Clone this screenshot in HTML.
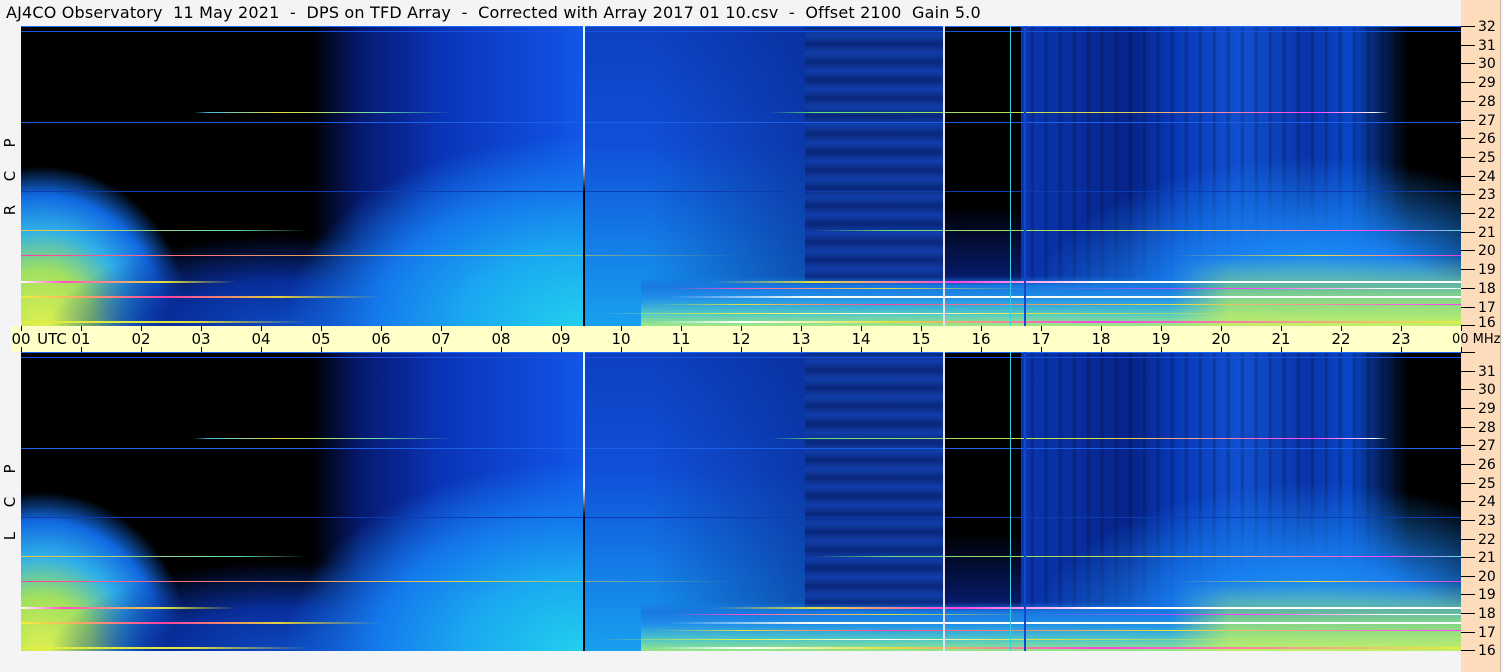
<!DOCTYPE html>
<html><head><meta charset="utf-8"><style>
*{margin:0;padding:0;box-sizing:border-box}
body{width:1503px;height:672px;background:#f4f4f6;position:relative;overflow:hidden;font-family:"DejaVu Sans","Liberation Sans",sans-serif;color:#000}
.title{position:absolute;left:6px;top:3px;font-size:16px;white-space:pre;letter-spacing:0.18px}
.peach{position:absolute;left:1461px;top:0;width:40px;height:672px;background:#fddcbc;border-right:1px solid #c8b8a8}
.panel{position:absolute;left:21px;width:1440px;height:300px;background:#000;overflow:hidden}
.panel div{position:absolute}
.l{left:0;width:1440px;height:1px}
.axis{position:absolute;left:12px;top:326px;width:1449px;height:26px;background:#ffffc8}
.tk{position:absolute;width:1px;height:5px;background:#000}
.lab{position:absolute;font-size:15px;top:330px;width:30px;text-align:center;margin-left:-15px;white-space:nowrap}
.rt{position:absolute;left:1461px;width:14px;height:1px;background:#000}
.rl{position:absolute;left:1478px;font-size:14px;line-height:14px}
.side{position:absolute;left:3px;font-size:15px;transform:rotate(-90deg);width:14px;text-align:center}
</style></head><body>
<div class="peach"></div>
<div class="title">AJ4CO Observatory  11 May 2021  -  DPS on TFD Array  -  Corrected with Array 2017 01 10.csv  -  Offset 2100  Gain 5.0</div>

<div class="side" style="top:134px">P</div>
<div class="side" style="top:167px">C</div>
<div class="side" style="top:201px">R</div>
<div class="side" style="top:460px">P</div>
<div class="side" style="top:493px">C</div>
<div class="side" style="top:527px">L</div>

<div class="panel" style="top:26px" id="p1">
 <div style="left:0;top:0;width:562px;height:300px;background:linear-gradient(90deg,#000 0,#000 290px,#061a70 340px,#0a34b8 420px,#1050e0 540px,#1258e8 562px)"></div>
 <div style="left:0;top:0;width:562px;height:300px;background:
  radial-gradient(ellipse 300px 190px at 562px 300px,#22d0ee 0,#1aa8f0 40%,#1478ec 70%,transparent 100%),
  radial-gradient(ellipse 230px 90px at 260px 300px,#0c48c0 0,#082c98 50%,transparent 100%),
  radial-gradient(ellipse 150px 160px at 20px 300px,#e0f050 0,#a0e060 35%,#30b0e8 60%,#1068e0 82%,transparent 100%)"></div>
 <div style="left:564px;top:0;width:220px;height:300px;background:linear-gradient(180deg,#0c40c0 0,#1050d8 40%,#1480e8 75%,#18a0ee 100%)"></div>
 <div style="left:564px;top:0;width:220px;height:300px;background:linear-gradient(90deg,transparent 30%,rgba(8,40,140,.6) 100%)"></div>
 <div style="left:784px;top:0;width:138px;height:300px;background:repeating-linear-gradient(180deg,#0a2e90 0,#1448c8 9px,#0a2e90 18px);opacity:.85"></div>
 <div style="left:924px;top:0;width:76px;height:300px;background:linear-gradient(180deg,#000 0,#000 60%,#061c70 85%,#0a40b0)"></div>
 <div style="left:1000px;top:0;width:440px;height:300px;background:linear-gradient(90deg,#0a36b0 0,#06248a 25%,#0838b8 35%,#1050d0 50%,#0a34a8 65%,#0846c8 75%,#000 88%)"></div>
 <div style="left:1000px;top:0;width:440px;height:300px;background:repeating-linear-gradient(90deg,transparent 0,transparent 9px,rgba(0,0,0,.25) 11px,transparent 14px)"></div>
 <div style="left:1000px;top:100px;width:440px;height:200px;background:radial-gradient(ellipse 290px 170px at 290px 200px,#30b0f0,#1880f0 50%,transparent 100%)"></div>
 <div style="left:620px;top:250px;width:820px;height:50px;background:linear-gradient(180deg,transparent,#1878e0 20%,#2090e8 45%,#50c8c8 75%,#a0e880)"></div>
 <div style="left:1150px;top:230px;width:290px;height:70px;background:linear-gradient(180deg,transparent,#a0e870 60%,#d0f060);opacity:.8;-webkit-mask-image:linear-gradient(90deg,transparent,#000 20%)"></div>
 <div class="l" style="top:0;background:#1a6cff"></div>
 <div class="l" style="top:5px;background:#1a50e0"></div>
 <div class="l" style="top:96px;background:#1a60e8"></div>
 <div class="l" style="top:165px;background:#0c3cb0"></div>
 <div class="l" style="top:86px;background:linear-gradient(90deg,transparent 12%,#40c0e0 13%,#e0e040 18%,#60e0b0 25%,transparent 30%,transparent 52%,#60e080 55%,#e0e040 75%,#ff40ff 90%,#fff 94%,transparent 95%)"></div>
 <div class="l" style="top:204px;background:linear-gradient(90deg,#f0c040,#60e0b0 15%,transparent 20%,transparent 55%,#60e080 60%,#e0e040 80%,#ff40ff 95%,#60e0e0)"></div>
 <div class="l" style="top:229px;background:linear-gradient(90deg,#ff40a0,#e0d040 30%,transparent 50%,transparent 80%,#f0e040 90%,#e040e0)"></div>
 <div class="l" style="top:255px;height:2px;background:linear-gradient(90deg,#fff 0,#ff50c0 3%,#e0e040 10%,transparent 15%,transparent 48%,#e0e040 55%,#ff40e0 65%,#fff 75%,#fff 100%)"></div>
 <div class="l" style="top:262px;background:linear-gradient(90deg,transparent 45%,#ff50c0 50%,#e0e040 60%,transparent 70%,#ff40ff 85%,#fff 95%)"></div>
 <div class="l" style="top:270px;height:2px;background:linear-gradient(90deg,#f0f040 0,#ff40a0 10%,#e0d040 18%,transparent 25%,transparent 45%,#ffffff 55%,#fff 100%)"></div>
 <div class="l" style="top:278px;background:linear-gradient(90deg,transparent 44%,#e0e040 50%,#ff40a0 60%,#e0e040 80%,#ff40ff 100%)"></div>
 <div class="l" style="top:287px;background:linear-gradient(90deg,transparent 40%,#e0f040 50%,#fff 60%,#e0e040 70%,transparent 90%)"></div>
 <div class="l" style="top:295px;height:2px;background:linear-gradient(90deg,#e0f040,#e0e040 12%,transparent 20%,transparent 44%,#fff 50%,#e0e040 60%,#ff40e0 75%,#e0f040)"></div>
 <div style="left:562px;top:0;width:2px;height:300px;background:linear-gradient(180deg,#e0f8ff,#fff 45%,#000 55%,#000)"></div>
 <div style="left:922px;top:0;width:2px;height:300px;background:#e8e0f0"></div>
 <div style="left:989px;top:0;width:1px;height:300px;background:#30d0e0"></div>
 <div style="left:1003px;top:0;width:2px;height:300px;background:#1448c8"></div>
</div>

<div class="axis"></div>
<div class="panel" style="top:352px;height:299px" id="p2"></div>

<script>
document.getElementById('p2').innerHTML=document.getElementById('p1').innerHTML;
var b=document.body,h='';
for(var i=0;i<=24;i++){var x=21+i*60;
 h+='<div class="tk" style="left:'+x+'px;top:326px"></div><div class="tk" style="left:'+x+'px;top:347px"></div>';
 if(i<24)h+='<div class="lab" style="left:'+x+'px">'+(i<10?'0':'')+i+'</div>';}
h+='<div class="lab" style="left:52px;width:40px;margin-left:-20px">UTC</div>';
h+='<div class="lab" style="left:1461px;width:44px;text-align:left;margin-left:-9px;font-size:13px;top:332px">00 MHz</div>';
for(var k=0;k<=16;k++){var v=32-k;
 var y1=26+k*18.7,y2=352+k*18.65;
 h+='<div class="rt" style="top:'+Math.round(y1)+'px"></div>';
 h+='<div class="rt" style="top:'+Math.round(y2)+'px"></div>';
 if(k<16)h+='<div class="rl" style="top:'+Math.round(y1-6)+'px">'+v+'</div>';
 else h+='<div class="rl" style="top:'+Math.round(y1-9)+'px">16</div>';
 if(k>0)h+='<div class="rl" style="top:'+Math.round(y2-6)+'px">'+v+'</div>';}
var d=document.createElement('div');d.innerHTML=h;b.appendChild(d);
</script>
</body></html>
